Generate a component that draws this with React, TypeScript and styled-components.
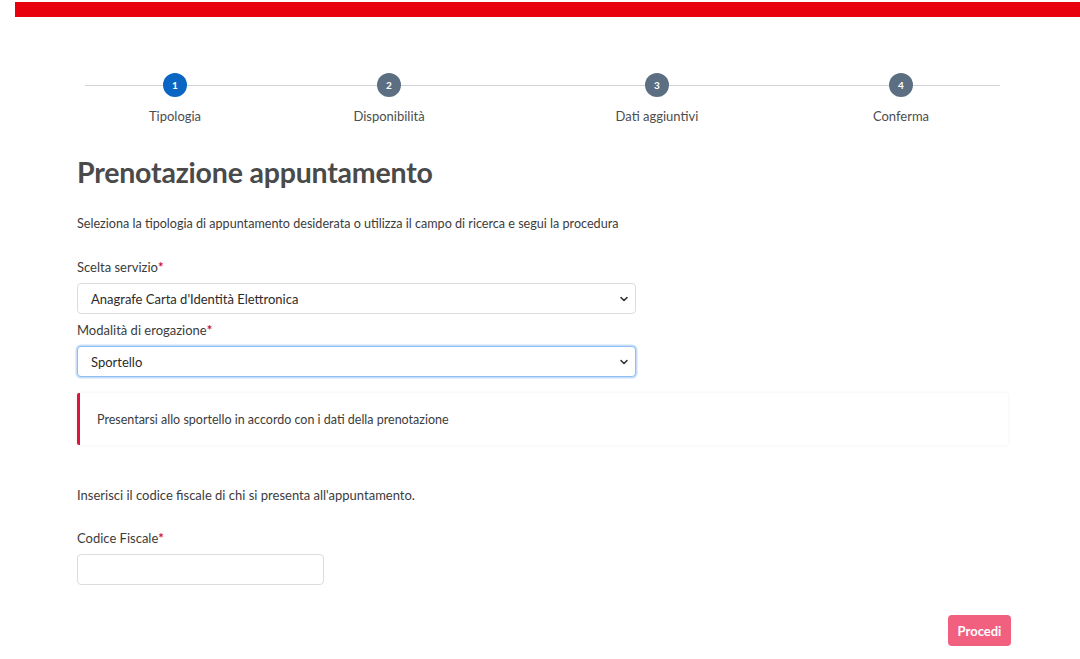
import React from "react";
import styled, { createGlobalStyle } from "styled-components";

const GlobalStyle = createGlobalStyle`
  html, body { margin: 0; padding: 0; background: #ffffff; }
  body { font-family: "Lato", "Open Sans", sans-serif; color: #333; }
  * { box-sizing: border-box; }
`;

const Page = styled.div`
  width: 1080px;
  height: 659px;
  overflow: hidden;
  background: #fff;
  padding-top: 2px;
`;

const TopBar = styled.div`
  margin-left: 15px;
  height: 15px;
  background: #e8000f;
`;

const Stepper = styled.div`
  position: relative;
  margin: 56px 0 0 85px;
  width: 915px;
  height: 52px;
`;

const StepLine = styled.div`
  position: absolute;
  left: 0;
  right: 0;
  top: 12px;
  height: 1px;
  background: #d0d3d6;
`;

const StepsRow = styled.div`
  position: relative;
  display: flex;
`;

const Step = styled.div<{ $offset: number }>`
  width: 120px;
  margin-left: ${(p) => p.$offset}px;
  display: flex;
  flex-direction: column;
  align-items: center;
`;

const Circle = styled.div<{ $active?: boolean }>`
  width: 24px;
  height: 24px;
  border-radius: 50%;
  background: ${(p) => (p.$active ? "#0b66c3" : "#5c6f82")};
  color: #fff;
  font-size: 10px;
  font-weight: 700;
  display: flex;
  align-items: center;
  justify-content: center;
`;

const StepLabel = styled.div`
  margin-top: 10px;
  font-size: 13px;
  line-height: 18px;
  color: #4d4d4d;
`;

const Content = styled.div`
  padding: 0 69px 0 77px;
  display: flex;
  flex-direction: column;
`;

const Title = styled.h1`
  margin: 30px 0 0;
  font-size: 28.5px;
  font-weight: 700;
  line-height: 34px;
  color: #4a4a4a;
  letter-spacing: -0.2px;
`;

const Lead = styled.p`
  margin: 26px 0 0;
  font-size: 12.6px;
  line-height: 18px;
  color: #3c3c3c;
`;

const Label = styled.label<{ $top: number }>`
  display: block;
  margin-top: ${(p) => p.$top}px;
  font-size: 13px;
  line-height: 18px;
  color: #3c3c3c;
`;

const Req = styled.span`
  color: #c5113f;
  font-weight: 700;
`;

const SelectBox = styled.div<{ $focus?: boolean }>`
  margin-top: 7px;
  width: 559px;
  height: 31px;
  border: 1px solid ${(p) => (p.$focus ? "#8fbff0" : "#dcdcdc")};
  box-shadow: ${(p) => (p.$focus ? "0 0 0 1.5px #c6defa" : "none")};
  border-radius: 4px;
  display: flex;
  align-items: center;
  justify-content: space-between;
  padding: 0 6px 0 13px;
  font-size: 13px;
  color: #2b2b2b;
  background: #fff;
`;

const Chevron = styled.svg`
  width: 10px;
  height: 10px;
`;

const Alert = styled.div`
  margin-top: 16px;
  width: 931px;
  height: 52px;
  border-left: 3px solid #e0133f;
  box-shadow: 0 0 4px rgba(0, 0, 0, 0.06);
  border-radius: 2px;
  display: flex;
  align-items: center;
  padding-left: 17px;
  font-size: 12.5px;
  color: #3c3c3c;
`;

const Note = styled.p`
  margin: 41px 0 0;
  font-size: 13px;
  line-height: 18px;
  color: #3c3c3c;
`;

const TextInput = styled.input`
  margin-top: 7px;
  width: 247px;
  height: 31px;
  border: 1px solid #dcdcdc;
  border-radius: 4px;
  background: #fff;
  outline: none;
`;

const Actions = styled.div`
  margin-top: 30px;
  display: flex;
  justify-content: flex-end;
`;

const Button = styled.button`
  width: 63px;
  height: 31px;
  border: none;
  border-radius: 4px;
  background: #f1607f;
  color: #fff;
  font-family: "Lato", sans-serif;
  font-size: 13px;
  font-weight: 700;
`;

const ChevronIcon = () => (
  <Chevron viewBox="0 0 10 10">
    <path d="M2 3.5 L5 6.5 L8 3.5" fill="none" stroke="#333" strokeWidth="1.6" strokeLinecap="round" strokeLinejoin="round" />
  </Chevron>
);

const steps = [
  { n: 1, label: "Tipologia", offset: 30, active: true },
  { n: 2, label: "Disponibilità", offset: 94 },
  { n: 3, label: "Dati aggiuntivi", offset: 148 },
  { n: 4, label: "Conferma", offset: 124 },
];

export default function App() {
  return (
    <Page>
      <GlobalStyle />
      <TopBar />
      <Stepper>
        <StepLine />
        <StepsRow>
          {steps.map((s) => (
            <Step key={s.n} $offset={s.offset}>
              <Circle $active={s.active}>{s.n}</Circle>
              <StepLabel>{s.label}</StepLabel>
            </Step>
          ))}
        </StepsRow>
      </Stepper>
      <Content>
        <Title>Prenotazione appuntamento</Title>
        <Lead>
          Seleziona la tipologia di appuntamento desiderata o utilizza il campo di ricerca e segui la procedura
        </Lead>
        <Label $top={25}>
          Scelta servizio<Req>*</Req>
        </Label>
        <SelectBox>
          <span>Anagrafe Carta d'Identità Elettronica</span>
          <ChevronIcon />
        </SelectBox>
        <Label $top={7}>
          Modalità di erogazione<Req>*</Req>
        </Label>
        <SelectBox $focus>
          <span>Sportello</span>
          <ChevronIcon />
        </SelectBox>
        <Alert>Presentarsi allo sportello in accordo con i dati della prenotazione</Alert>
        <Note>Inserisci il codice fiscale di chi si presenta all'appuntamento.</Note>
        <Label $top={25}>
          Codice Fiscale<Req>*</Req>
        </Label>
        <TextInput />
        <Actions>
          <Button>Procedi</Button>
        </Actions>
      </Content>
    </Page>
  );
}
